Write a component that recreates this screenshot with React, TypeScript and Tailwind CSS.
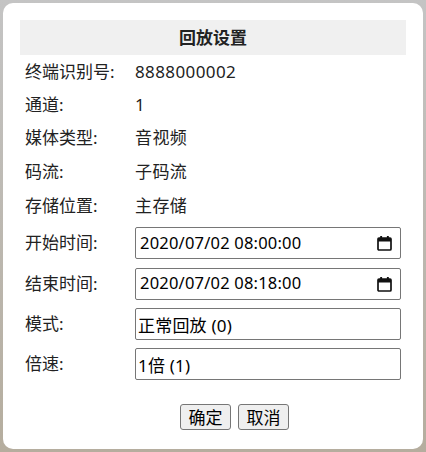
import React from "react";

const font = { fontFamily: '"Noto Sans", "Noto Sans CJK SC", sans-serif' };

const CalendarIcon: React.FC = () => (
  <svg width="15" height="16" viewBox="0 0 15 16" className="shrink-0">
    <rect x="1" y="3" width="13" height="12" rx="1" fill="none" stroke="#111" strokeWidth="1.7" />
    <rect x="1" y="3" width="13" height="3.5" fill="#111" />
    <rect x="3.2" y="1" width="1.9" height="3" fill="#111" />
    <rect x="9.9" y="1" width="1.9" height="3" fill="#111" />
  </svg>
);

const InfoRow: React.FC<{ label: string; value: string; h: string }> = ({ label, value, h }) => (
  <div className={`flex items-center ${h}`}>
    <span className="w-[110px] text-[17px] text-[#222]">{label}</span>
    <span className="text-[17px] tracking-[0.4px] text-[#222]">{value}</span>
  </div>
);

const DateField: React.FC<{ value: string }> = ({ value }) => (
  <div className="flex h-[32px] w-[266px] items-center justify-between rounded-[2px] border border-[#767676] bg-white pl-[4px] pr-[8px]">
    <span className="text-[16.5px] tracking-[0.2px] text-black">{value}</span>
    <CalendarIcon />
  </div>
);

const TextField: React.FC<{ value: string }> = ({ value }) => (
  <input
    readOnly
    value={value}
    className="h-[32px] w-[266px] rounded-[2px] border border-[#767676] bg-white px-[2px] text-[17px] tracking-[0.2px] text-black outline-none"
    style={font}
  />
);

const FieldRow: React.FC<{ label: string; h: string; children: React.ReactNode }> = ({ label, h, children }) => (
  <div className={`flex items-center ${h}`}>
    <span className="w-[110px] text-[17px] text-[#222]">{label}</span>
    {children}
  </div>
);

const App: React.FC = () => {
  return (
    <div className="h-[452px] w-[426px] bg-gradient-to-b from-[#c4c4c4] to-[#b5ad9e] p-[3px]" style={font}>
      <div className="h-[446px] w-[420px] rounded-[10px] bg-white px-[17px] pt-[17px]">
        <div className="flex h-[35px] items-center justify-center bg-[#f0f0f0] text-[17px] font-bold text-[#222]">
          回放设置
        </div>
        <div className="pl-[5px]">
          <InfoRow label="终端识别号:" value="8888000002" h="h-[34px]" />
          <InfoRow label="通道:" value="1" h="h-[32px]" />
          <InfoRow label="媒体类型:" value="音视频" h="h-[34px]" />
          <InfoRow label="码流:" value="子码流" h="h-[34px]" />
          <InfoRow label="存储位置:" value="主存储" h="h-[34px]" />
          <FieldRow label="开始时间:" h="h-[40px]">
            <DateField value="2020/07/02 08:00:00" />
          </FieldRow>
          <FieldRow label="结束时间:" h="h-[41px]">
            <DateField value="2020/07/02 08:18:00" />
          </FieldRow>
          <FieldRow label="模式:" h="h-[40px]">
            <TextField value="正常回放 (0)" />
          </FieldRow>
          <FieldRow label="倍速:" h="h-[40px]">
            <TextField value="1倍 (1)" />
          </FieldRow>
        </div>
        <div className="mt-[20px] flex justify-center gap-[7px] pl-[43px]">
          <button className="h-[26px] w-[51px] rounded-[3px] border border-[#767676] bg-[#efefef] text-[17px] leading-none text-black">
            确定
          </button>
          <button className="h-[26px] w-[51px] rounded-[3px] border border-[#767676] bg-[#efefef] text-[17px] leading-none text-black">
            取消
          </button>
        </div>
      </div>
    </div>
  );
};

export default App;
